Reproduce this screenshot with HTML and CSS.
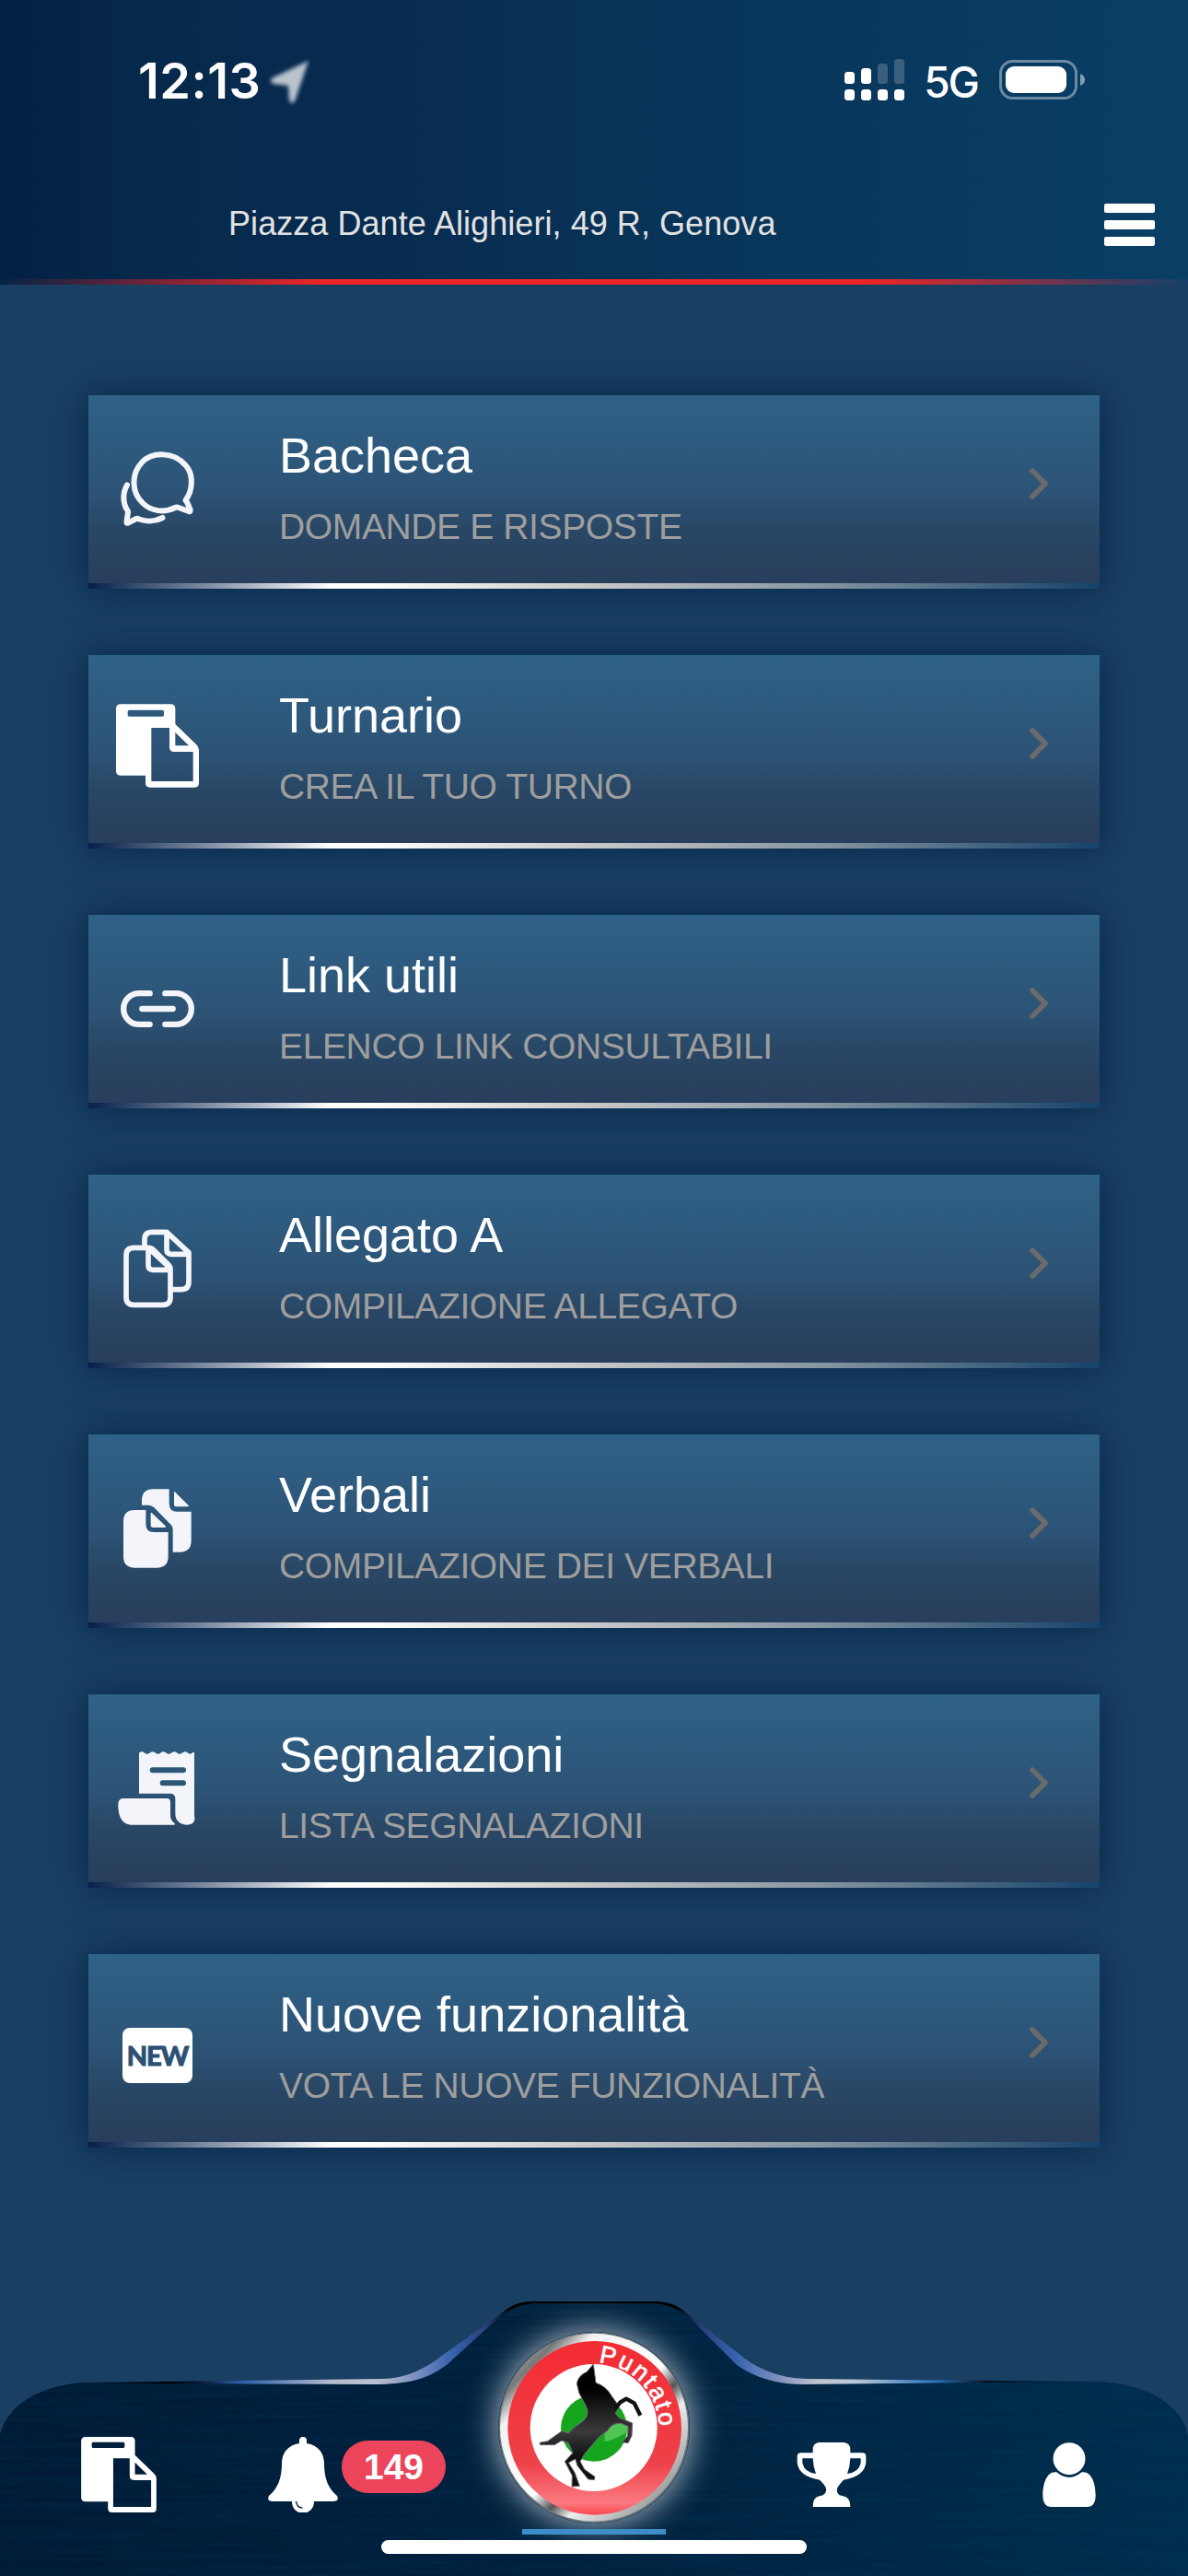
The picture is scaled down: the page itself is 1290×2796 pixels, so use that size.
FILE: index.html
```html
<!DOCTYPE html>
<html lang="it">
<head>
  <meta charset="utf-8">
  <title>Puntato</title>
  <link rel="stylesheet" href="styles.css">
</head>
<body>
<!-- icon shared by the menu and the bottom bar -->
<svg class="defs">
  <symbol id="paste" viewBox="78 74 270 271">
    <path fill-rule="evenodd" fill="currentColor" d="M94 74H256Q271 74 271 89V139L340 206Q348 214 348 224V331Q348 345 334 345H189Q174 345 174 331V306H94Q78 306 78 291V89Q78 74 94 74ZM121 93Q116 93 116 98V109Q116 114 121 114H229Q234 114 234 109V98Q234 93 229 93ZM193 151V325H329V229H267Q252 229 252 214V151ZM271 166V209H315Z"/>
  </symbol>
</svg>

<header>
  <div class="status">
    <span class="clock">12:13</span>
    <svg class="location" width="48" height="52" viewBox="0 0 48 52"><path d="M45 5L5 24q-3 4 2 6l16 2 1 16q3 5 6 1z"/></svg>
    <svg class="signal" width="66" height="46" viewBox="0 0 66 46">
      <rect x="0" y="14" width="11" height="13" rx="3.5"/>
      <rect x="18" y="10" width="11" height="17" rx="3.5"/>
      <rect class="off" x="36" y="5" width="11" height="22" rx="3.5"/>
      <rect class="off" x="54" y="0" width="11" height="27" rx="3.5"/>
      <rect x="0" y="33" width="11" height="12" rx="3.5"/>
      <rect x="18" y="33" width="11" height="12" rx="3.5"/>
      <rect x="36" y="33" width="11" height="12" rx="3.5"/>
      <rect x="54" y="33" width="11" height="12" rx="3.5"/>
    </svg>
    <span class="network">5G</span>
    <svg class="battery" width="94" height="44" viewBox="0 0 94 44">
      <rect class="frame" x="1.5" y="1.5" width="82" height="40" rx="13"/>
      <rect x="7" y="7" width="66" height="29" rx="9"/>
      <path class="off" d="M88 15q5 2 5 6.500t-5 6.500z"/>
    </svg>
  </div>
  <div class="topbar">
    <span class="address">Piazza Dante Alighieri, 49 R, Genova</span>
    <div class="burger"><i></i><i></i><i></i></div>
  </div>
</header>

<main>
  <div class="card">
    <svg class="icon line" viewBox="0 0 96 96">
      <g stroke-width="6">
        <path d="M78.500 63C87 51 87 34 78.500 25C66 10 42 10 31 22C19 35 20 55 32 66C41 75 55 77 67 71Q69 70 71 71L82 75Q84 76 83.500 73L80 65Q78.500 64 78.500 63Z"/>
        <path d="M15 46.500C10 55 10 67 16 75V76L14.500 86Q14 88.500 16 87.500L25 83Q27 82.500 28 83.500C36 86.500 46 86 53.500 82"/>
      </g>
    </svg>
    <div class="text">
      <h2>Bacheca</h2>
      <p>DOMANDE E RISPOSTE</p>
    </div>
    <svg class="chevron" viewBox="0 0 20 34"><path d="M3 3l14 14-14 14"/></svg>
  </div>

  <div class="card">
    <svg class="icon paste"><use href="#paste"/></svg>
    <div class="text">
      <h2>Turnario</h2>
      <p>CREA IL TUO TURNO</p>
    </div>
    <svg class="chevron" viewBox="0 0 20 34"><path d="M3 3l14 14-14 14"/></svg>
  </div>

  <div class="card">
    <svg class="icon line" viewBox="69 912 288 288">
      <path stroke-width="19" d="M188 1014.500H153a50.500 50.500 0 0 0 0 101h35M238 1014.500h35a50.500 50.500 0 0 1 0 101h-35M163 1065h100"/>
    </svg>
    <div class="text">
      <h2>Link utili</h2>
      <p>ELENCO LINK CONSULTABILI</p>
    </div>
    <svg class="chevron" viewBox="0 0 20 34"><path d="M3 3l14 14-14 14"/></svg>
  </div>

  <div class="card">
    <svg class="icon line" viewBox="69 48 288 288">
      <path stroke-width="17" d="M183 133H136Q111 133 111 158V295Q111 319 136 319H231Q255 319 255 295V200ZM183 133V190Q183 205 198 205H255M171 133V106Q171 82 195 82H243L315 149V243Q315 269 290 269H258M243 82V139Q243 154 258 154H315M183 133Q193 132 198 138L250 190Q255 196 255 200"/>
    </svg>
    <div class="text">
      <h2>Allegato A</h2>
      <p>COMPILAZIONE ALLEGATO</p>
    </div>
    <svg class="chevron" viewBox="0 0 20 34"><path d="M3 3l14 14-14 14"/></svg>
  </div>

  <div class="card">
    <svg class="icon solid" viewBox="69 894 288 288">
      <path d="M175 987H139Q102 987 102 1024V1138Q102 1175 139 1175H211Q248 1175 248 1138V1059H201Q175 1059 175 1033Z"/>
      <path d="M191 998q0-5 4-1l44 42q3 5-2 5h-38q-8 0-8-8z"/>
      <path d="M162 971V956Q162 919 199 919H251V965Q251 992 277 992H323V1087Q323 1124 286 1124H263V1049Q263 1041 257 1035L202 979Q194 971 184 971Z"/>
      <path d="M267 930q0-5 4-1l43 43q3 4-2 4h-37q-8 0-8-8z"/>
    </svg>
    <div class="text">
      <h2>Verbali</h2>
      <p>COMPILAZIONE DEI VERBALI</p>
    </div>
    <svg class="chevron" viewBox="0 0 20 34"><path d="M3 3l14 14-14 14"/></svg>
  </div>

  <div class="card">
    <svg class="icon solid" viewBox="69 60 288 288">
      <path fill-rule="evenodd" d="M153 98q3-6 12-4l9 6q5 3 10 0l8-5q5-3 10 0l8 5q5 3 10 0l7-5q5-3 10 0l8 5q5 3 10 0l8-5q5-3 10 0l7 5q5 3 10 0l8-5q5-3 10 0l7 5q5 3 8 0q8-8 10-2V300Q340 332 307 332Q272 328 271 297V247Q271 230 254 230H153ZM197 145a9 9 0 0 0 0 18H297a9 9 0 0 0 0-18ZM230 187a9 9 0 0 0 0 18H297a9 9 0 0 0 0-18Z"/>
      <path d="M102 246H243Q255 246 255 258V302Q255 317 269 327Q272 332 266 332H132C96 332 84 302 85 263Q86 246 102 246Z"/>
    </svg>
    <div class="text">
      <h2>Segnalazioni</h2>
      <p>LISTA SEGNALAZIONI</p>
    </div>
    <svg class="chevron" viewBox="0 0 20 34"><path d="M3 3l14 14-14 14"/></svg>
  </div>

  <div class="card">
    <div class="icon"><span class="new">NEW</span></div>
    <div class="text">
      <h2>Nuove funzionalità</h2>
      <p>VOTA LE NUOVE FUNZIONALITÀ</p>
    </div>
    <svg class="chevron" viewBox="0 0 20 34"><path d="M3 3l14 14-14 14"/></svg>
  </div>
</main>

<nav>
  <svg class="shape" viewBox="0 0 1290 298">
    <defs>
      <linearGradient id="edge" gradientUnits="userSpaceOnUse" x1="0" y1="0" x2="1290" y2="0">
        <stop offset=".08" stop-color="#001c38"/>
        <stop offset=".145" stop-color="#000"/>
        <stop offset=".17" stop-color="#0b1c3c"/>
        <stop offset=".205" stop-color="#2f62b0"/>
        <stop offset=".28" stop-color="#b5bbcd"/>
        <stop offset=".315" stop-color="#bcc0cf"/>
        <stop offset=".345" stop-color="#8797c4"/>
        <stop offset=".38" stop-color="#3763ae"/>
        <stop offset=".41" stop-color="#2a3f78"/>
        <stop offset=".43" stop-color="#000"/>
        <stop offset=".57" stop-color="#000"/>
        <stop offset=".59" stop-color="#2a3f78"/>
        <stop offset=".62" stop-color="#3763ae"/>
        <stop offset=".65" stop-color="#7689bd"/>
        <stop offset=".69" stop-color="#c3c6d1"/>
        <stop offset=".72" stop-color="#b9c8d8"/>
        <stop offset=".785" stop-color="#2f75bd"/>
        <stop offset=".83" stop-color="#06111f"/>
        <stop offset=".88" stop-color="#001c30"/>
        <stop offset=".95" stop-color="#002c4a"/>
      </linearGradient>
      <linearGradient id="metal">
        <stop offset="0" stop-color="#001a36"/>
        <stop offset=".5" stop-color="#00213e"/>
        <stop offset="1" stop-color="#002d4d"/>
      </linearGradient>
      <filter id="brush" x="0" y="0" width="100%" height="100%">
        <feTurbulence type="fractalNoise" baseFrequency=".006 .22" numOctaves="3"/>
        <feColorMatrix values="0 0 0 0 0  0 0 0 0 .06  0 0 0 0 .14  .9 0 0 0 -.25"/>
      </filter>
      <clipPath id="bar">
        <path d="M0 298V145C8 112 45 90 93 89L405 90C445 90 465 84 486 68L540 19Q556 4 580 2H710Q734 4 750 19L800 69Q830 90 872 90L1183 87C1240 87 1286 110 1290 149V298Z"/>
      </clipPath>
    </defs>
    <path fill="url(#edge)" d="M0 298V145C8 112 45 90 93 88L415 84C440 84 462 73 481 58L543 14Q556 1 575 0H715Q734 1 747 14L800 55Q832 83 875 84L1183 87C1240 87 1286 110 1290 149V298Z"/>
    <g clip-path="url(#bar)">
      <rect width="1290" height="298" fill="url(#metal)"/>
      <rect width="1290" height="298" filter="url(#brush)" opacity=".4"/>
    </g>
  </svg>

  <a class="item"><svg class="tab-paste"><use href="#paste"/></svg></a>
  <a class="item">
    <svg width="76" height="82" viewBox="0 0 76 82">
      <path d="M38 0a4 4 0 0 1 4 4v3C54 9 61 17 61 29C61 44 65 56 75 64Q78 70 70 70H50C50 87 26 87 26 70H6Q-2 70 1 64C11 56 15 44 15 29C15 17 22 9 34 7V4a4 4 0 0 1 4-4z"/>
      <path class="clapper" d="M30.500 70q1 7 7 7"/>
    </svg>
    <span class="badge">149</span>
  </a>
  <a class="item home">
    <svg class="logo" viewBox="123 152 624 624">
      <defs>
        <linearGradient id="chrome" x1="0" y1="0" x2="1" y2="1">
          <stop offset="0" stop-color="#e6eae9"/>
          <stop offset=".17" stop-color="#777"/>
          <stop offset=".25" stop-color="#f2f2f2"/>
          <stop offset=".52" stop-color="#fff"/>
          <stop offset=".6" stop-color="#555"/>
          <stop offset=".67" stop-color="#eceeee"/>
          <stop offset="1" stop-color="#666"/>
        </linearGradient>
        <linearGradient id="red" x1="0" y1="0" x2="0" y2="1">
          <stop offset="0" stop-color="#f42b33"/>
          <stop offset=".7" stop-color="#ee4048"/>
          <stop offset=".93" stop-color="#fb7a80"/>
          <stop offset="1" stop-color="#ff4650"/>
        </linearGradient>
        <linearGradient id="horse" x1="0" y1="0" x2="0" y2="1">
          <stop offset=".2" stop-color="#000"/>
          <stop offset=".55" stop-color="#3a3a3a"/>
          <stop offset=".75" stop-color="#111"/>
        </linearGradient>
        <path id="ring" d="M450 252A212 212 0 0 1 646 480"/>
      </defs>
      <circle cx="435" cy="464" r="311" fill="#66757d"/>
      <circle cx="435" cy="463" r="306" fill="url(#chrome)"/>
      <circle cx="437" cy="465" r="283" fill="url(#red)"/>
      <circle cx="434" cy="464" r="207" fill="#fff"/>
      <circle cx="435" cy="466" r="108" fill="#17a51f"/>
      <path fill="#4fc653" d="M470 480Q500 440 552 452Q550 490 470 510z"/>
      <g fill="url(#horse)" stroke="#756478" stroke-width="3">
        <path d="M433 257L441 318Q474 328 492 360L512 388Q512 404 505 418L517 432L560 449L558 490L546 514L526 511L544 492L546 460L526 451Q495 445 479 474Q450 492 438 510Q420 530 402 553L390 574L404 600L438 624L436 634L416 632L381 588L374 566L352 578L372 610L388 654L363 656L364 620L340 574L366 546L352 514L330 506L306 520L260 520L258 513L284 508L330 475L352 482Q370 460 395 446Q425 424 408 392L386 350L379 320Q383 295 412 282Z"/>
      </g>
      <path fill="none" stroke="#111" stroke-width="13" stroke-linejoin="round" d="M502 405L520 382L540 370L566 384L586 424"/>
      <text><textPath href="#ring" textLength="314">Puntato</textPath></text>
    </svg>
    <span class="active"></span>
  </a>
  <a class="item">
    <svg width="76" height="70" viewBox="0 0 224 210">
      <path fill-rule="evenodd" d="M72 0H151Q173 2 173 23V34H212Q224 34 224 46V65Q220 110 151 122L139 136Q120 158 138 172L150 175Q174 180 173 210H51Q50 180 72 175L84 172Q104 158 86 136L73 122Q4 110 0 65V46Q0 34 12 34H51V23Q51 2 72 0ZM17 52V67Q23 98 61 102Q52 80 51 52ZM173 52Q172 80 163 102Q201 98 207 67V52Z"/>
    </svg>
  </a>
  <a class="item">
    <svg width="58" height="70" viewBox="0 0 172 210">
      <circle cx="86" cy="53" r="52.500"/>
      <path d="M45 97Q86 131 127 97C158 92 172 132 172 172Q172 210 144 210H28Q0 210 0 172C0 132 14 92 45 97Z"/>
    </svg>
  </a>
  <div class="home-indicator"></div>
</nav>
</body>
</html>
```
FILE: styles.css
```css
body {
  display: flex;
  flex-direction: column;
  width: 1290px;
  height: 2796px;
  margin: 0;
  background-color: #193f62;
  color: #fff;
  font-family: 'Liberation Sans', Helvetica, Arial, sans-serif;
  overflow: hidden;
}

.defs {
  position: absolute;
  width: 0;
  height: 0;
}

/* header */
header {
  height: 303px;
  background: linear-gradient(to right, #042044, #06294b 12%, #082c52 38%, #083256 50%, #0a3f66);
  border-bottom: 6px solid;
  border-image: linear-gradient(to right, #052346, #ec2526 27%, #ec2526 73%, #14406a) 1;
  border-top: 0;
}

.status {
  display: flex;
  align-items: center;
  height: 174px;
  padding: 0 111px 0 150px;
  font-family: Inter, 'Liberation Sans', sans-serif;
}

.clock {
  width: 140px;
  font-size: 54px;
  font-weight: 600;
  letter-spacing: .5px;
}

.location {
  fill: #b9c4cf;
  filter: blur(2px);
}

.status .signal {
  margin-left: auto;
  margin-top: -1px;
  fill: #fff;
}

.off {
  fill: #fff;
  opacity: .2;
}

.network {
  margin: 4px 23px 0 20px;
  font-size: 46px;
  font-weight: 500;
  letter-spacing: -2px;
}

.battery {
  fill: #fff;
}

.battery .frame {
  fill: none;
  stroke: #fff;
  stroke-width: 3;
  opacity: .4;
}

.battery .off {
  opacity: .5;
}

.topbar {
  display: flex;
  align-items: center;
  justify-content: space-between;
  height: 139px;
  padding: 0 36px 0 248px;
}

.address {
  margin-top: -2px;
  color: #e2e2e2;
  font-size: 36px;
  letter-spacing: .06px;
}

.burger {
  display: flex;
  flex-direction: column;
  gap: 8.500px;
  width: 55px;
  margin-top: 1px;
}

.burger i {
  height: 9.500px;
  border-radius: 2px;
  background-color: #fff;
}

/* menu */
main {
  display: flex;
  flex-direction: column;
  gap: 72px;
  padding: 120px 96px 0;
}

.card {
  display: flex;
  height: 204px;
  padding-bottom: 6px;
  background:
    linear-gradient(to right, #05204a, #fff 24%, #fff 28%, #c8c8c8 50%, #8494a0 73%, #14426a) bottom / 100% 6px no-repeat,
    linear-gradient(#2f6287, #2c5376 50%, #294765 70%, #283d5c);
  box-shadow: 0 0 36px #06264c;
}

.icon {
  display: flex;
  align-items: center;
  justify-content: center;
  width: 96px;
  height: 96px;
  margin: 51px 84px 0 27px;
  overflow: visible;
}

.icon.line {
  fill: none;
  stroke: #f3f5fa;
  stroke-linecap: round;
  stroke-linejoin: round;
}

.icon.solid {
  fill: #f3f5fa;
}

.icon.paste {
  width: 90px;
  height: 91px;
  margin: 53px 87px 0 30px;
}

.new {
  width: 76px;
  height: 60px;
  margin-top: 22px;
  border-radius: 8px;
  background-color: #fff;
  color: #2c5173;
  font: bold 29px/60px Lato, sans-serif;
  letter-spacing: -1px;
  text-align: center;
  -webkit-text-stroke: 1.2px #2c5173;
}

.text {
  flex: 1;
  padding-top: 33px;
}

.text h2 {
  margin: 0 0 22px;
  font-size: 54px;
  font-weight: normal;
  line-height: 64px;
}

.text p {
  margin: 0;
  color: #9e9e9e;
  font-size: 39px;
  letter-spacing: -.37px;
  line-height: 48px;
}

.chevron {
  width: 20px;
  height: 34px;
  margin: 79px 56px 0 0;
  fill: none;
  stroke: #6b6b6b;
  stroke-width: 5.500;
  stroke-linecap: round;
  stroke-linejoin: round;
}

/* bottom bar */
nav {
  display: grid;
  grid-template-columns: repeat(5, 1fr);
  position: relative;
  height: 298px;
  margin-top: auto;
}

.shape {
  position: absolute;
  top: 0;
  left: 0;
  width: 1290px;
  height: 298px;
}

.item {
  display: flex;
  justify-content: center;
  align-items: center;
  position: relative;
  height: 78px;
  margin-top: 149px;
  fill: #fff;
}

.tab-paste {
  width: 82px;
  height: 82px;
}

.clapper {
  fill: none;
  stroke: #001d39;
  stroke-width: 1.500;
}

.badge {
  width: 113px;
  height: 57px;
  margin: -17px -1px 0 4px;
  border-radius: 29px;
  background-color: #ec445b;
  font-size: 39px;
  font-weight: bold;
  line-height: 58px;
  text-align: center;
}

.item.home {
  flex-direction: column;
  justify-content: flex-start;
  height: auto;
  margin-top: 33px;
}

.logo {
  width: 208px;
  height: 208px;
  border-radius: 50%;
  box-shadow: 0 0 34px 2px rgba(235, 240, 245, .7);
}

.logo text {
  fill: #fff;
  stroke: #fff;
  stroke-width: 2;
  font-size: 80px;
}

.active {
  width: 156px;
  height: 6px;
  margin-top: 6px;
  background-color: #3d8dc7;
}

.home-indicator {
  position: absolute;
  bottom: 24px;
  left: 414px;
  width: 462px;
  height: 15px;
  border-radius: 8px;
  background-color: #fff;
}
```
